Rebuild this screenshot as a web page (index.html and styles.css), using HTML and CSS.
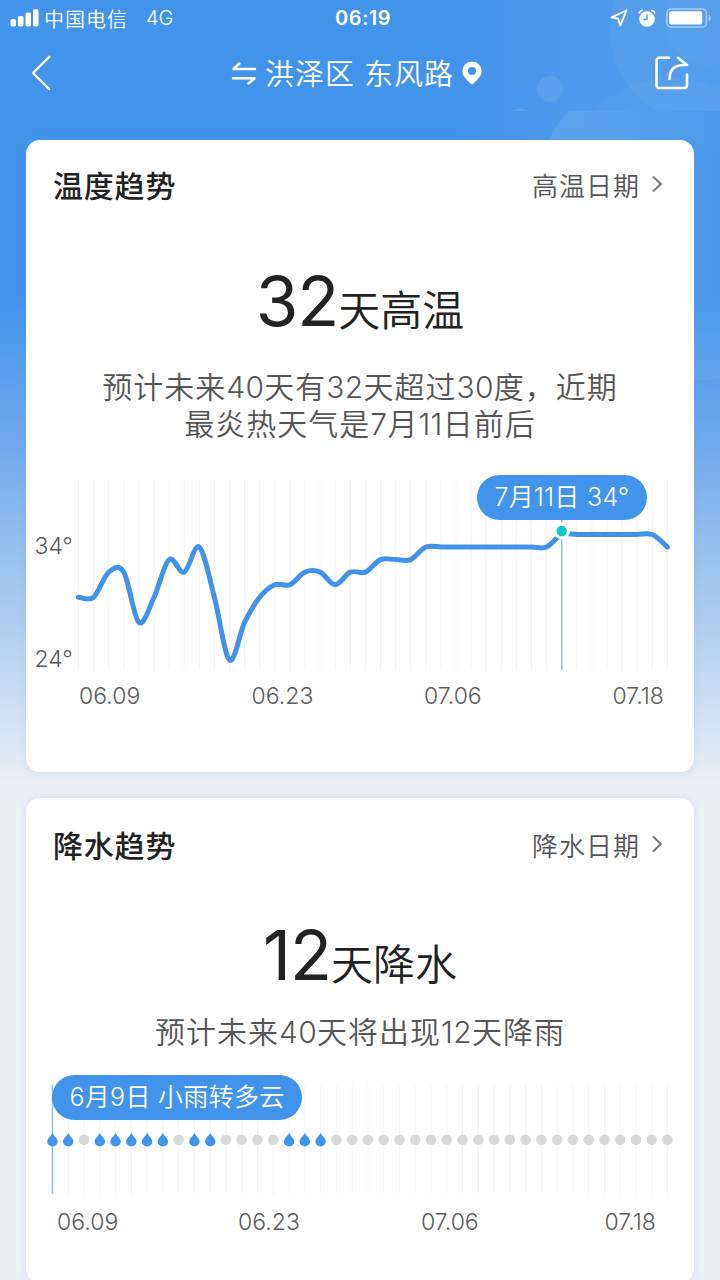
FILE: index.html
```
<!DOCTYPE html>
<html lang="zh-CN">
  <head>
    <meta charset="UTF-8" />
    <meta name="viewport" content="width=device-width, initial-scale=1.0" />
    <title>40天天气趋势</title>
    <link rel="stylesheet" href="styles.css">
  </head>
  <body>
    <svg class="bubbles" width="720" height="400" viewBox="0 0 720 400">
      <defs>
        <linearGradient id="glow" x1="0" x2="1" y1="0" y2="0">
          <stop offset="0" stop-color="#fff" stop-opacity="0" />
          <stop offset="0.5" stop-color="#fff" stop-opacity="0.06" />
          <stop offset="1" stop-color="#fff" stop-opacity="0.05" />
        </linearGradient>
        <linearGradient id="fade" x1="0" x2="1" y1="0" y2="0">
          <stop offset="0" stop-color="#fff" stop-opacity="0.1" />
          <stop offset="1" stop-color="#fff" stop-opacity="0.01" />
        </linearGradient>
        <clipPath id="top"><rect width="720" height="111" /></clipPath>
      </defs>
      <path d="M450 0H720V378Q706 381 690 380V140H450z" fill="url(#glow)" />
      <g clip-path="url(#top)" fill="#fff">
        <circle cx="703" cy="30" r="93" fill-opacity="0.045" />
        <circle cx="709" cy="20" r="45" fill-opacity="0.04" />
        <circle cx="550" cy="89" r="13" fill-opacity="0.09" />
        <circle cx="520" cy="119" r="11" fill-opacity="0.12" />
        <circle cx="672" cy="190" r="112" fill-opacity="0.035" />
      </g>
      <path d="M549 140q8-17 20-29h151v40H549z" fill="url(#fade)" />
    </svg>

    <div class="statusbar">
      <div class="status-left">
        <svg width="29" height="18" viewBox="0 0 29 18" fill="#fff">
          <rect x="0.5" y="10" width="5.5" height="7.5" rx="1.6" />
          <rect x="8" y="7" width="5.5" height="10.5" rx="1.6" />
          <rect x="15.5" y="3.5" width="5.5" height="14" rx="1.6" />
          <rect x="23" y="0.2" width="5.5" height="17.3" rx="1.6" />
        </svg>
        <span class="carrier">中国电信</span>
        <span class="network">4G</span>
      </div>
      <div class="time">06:19</div>
      <div class="status-right">
        <svg width="18" height="18" viewBox="0 0 18 18" fill="none" stroke="#fff" stroke-width="1.9" stroke-linejoin="round">
          <path d="M16.500 1.500 1.500 8.300l6.800 1.400 2 6.800z" />
        </svg>
        <svg width="18" height="18" viewBox="0 0 18 18">
          <circle cx="9" cy="10" r="7.8" fill="#fff" />
          <path d="M1 4.500 Q1.500 1.500 4.800 1.200M17 4.500Q16.500 1.500 13.200 1.200" stroke="#fff" stroke-width="1.6" fill="none" />
          <path d="M9 5.500V10.500H5.500" stroke="#4f9aeb" stroke-width="1.4" fill="none" />
        </svg>
        <svg width="46" height="20" viewBox="0 0 46 20">
          <rect x="0.9" y="0.9" width="39.5" height="18" rx="4" fill="none" stroke="#fff" stroke-opacity="0.45" stroke-width="1.5" />
          <rect x="3.2" y="3.3" width="33" height="13.2" rx="2" fill="#fff" />
          <path d="M42.8 6.500q2 1 2 3.400t-2 3.400z" fill="#fff" fill-opacity="0.5" />
        </svg>
      </div>
    </div>

    <div class="navbar">
      <svg width="20" height="36" viewBox="0 0 20 36" fill="none" stroke="#fff" stroke-width="2.4" stroke-linecap="round" stroke-linejoin="round">
        <path d="M18.200 1.800 2 18l16.200 16.200" />
      </svg>
      <div class="location">
        <svg width="26" height="26" viewBox="0 0 26 26" fill="none" stroke="#fff" stroke-width="2.5" stroke-linecap="round" stroke-linejoin="round">
          <path d="M8.500 3.500 2.500 9H24M2 18.200H23.500L17.500 23.500" />
        </svg>
        <span>洪泽区 东风路</span>
        <svg width="20" height="24" viewBox="0 0 20 24">
          <path d="M10 0.500a9.600 9.600 0 0 0-9.600 9.600C0.400 16 6 19.500 8.700 22.800q1.300 1.300 2.600 0C14 19.500 19.600 16 19.600 10.100A9.600 9.600 0 0 0 10 0.500zM10 6a4 4 0 1 1 0 8 4 4 0 0 1 0-8z" fill="#fff" fill-rule="evenodd" />
        </svg>
      </div>
      <svg width="34" height="34" viewBox="0 0 34 34" fill="none" stroke="#fff" stroke-width="2.6" stroke-linecap="round" stroke-linejoin="round">
        <path d="M14 1.800H4.500Q1.500 1.800 1.500 4.800V29Q1.500 32 4.500 32H29Q32 32 32 29V18.500" />
        <path d="M23 1.800 32 9H29C19 9 14.500 14 14.500 23" />
      </svg>
    </div>

    <div class="card temp-card">
      <div class="card-head">
        <h2>温度趋势</h2>
        <a class="more">高温日期
          <svg width="12" height="18" viewBox="0 0 12 18"><path d="M2 1.500 9.800 9 2 16.500" /></svg>
        </a>
      </div>
      <div class="summary"><b>32</b>天高温</div>
      <p class="desc">预计未来<i>40</i>天有<i>32</i>天超过<i>30</i>度，近期<br>最炎热天气是<i>7</i>月<i>11</i>日前后</p>
      <div class="chart">
        <svg id="tempChart" width="668" height="240" viewBox="0 0 668 240"></svg>
        <div class="tip temp-tip">7月11日 34°</div>
      </div>
    </div>

    <div class="card rain-card">
      <div class="card-head">
        <h2>降水趋势</h2>
        <a class="more">降水日期
          <svg width="12" height="18" viewBox="0 0 12 18"><path d="M2 1.500 9.800 9 2 16.500" /></svg>
        </a>
      </div>
      <div class="summary"><b>12</b>天降水</div>
      <p class="desc">预计未来<i>40</i>天将出现<i>12</i>天降雨</p>
      <div class="chart">
        <svg id="rainChart" width="668" height="165" viewBox="0 0 668 165"></svg>
        <div class="tip rain-tip">6月9日 小雨转多云</div>
      </div>
    </div>

    <script>
      const temps = [29, 29, 31, 31, 27, 29, 32, 31, 33, 29, 24, 27, 29, 30, 30, 31, 31, 30, 31, 31,
        32, 32, 32, 33, 33, 33, 33, 33, 33, 33, 33, 33, 34, 34, 34, 34, 34, 34, 34, 33]
      const rainDays = [0, 1, 3, 4, 5, 6, 7, 9, 10, 15, 16, 17]

      function vline(x, y1, y2, cls) {
        return `<path class="${cls}" d="M${x} ${y1}V${y2}"/>`
      }

      function label(x, y, text) {
        return `<text x="${x}" y="${y}">${text}</text>`
      }

      function drawTemp() {
        const pts = temps.map((t, i) => [52.5 + i * 15.1, 185 - (t - 24) * 12.55])
        let out = pts.map(p => vline(p[0], 5, 195, "grid")).join("")
        out += vline(535.7, 45, 195, "cursor")

        // smooth the line through every day
        let d = `M${pts[0]}`
        for (let i = 0; i < pts.length - 1; i++) {
          const a = pts[i - 1] || pts[i]
          const b = pts[i]
          const c = pts[i + 1]
          const e = pts[i + 2] || c
          d += `C${b[0] + (c[0] - a[0]) / 6} ${b[1] + (c[1] - a[1]) / 6} ${c[0] - (e[0] - b[0]) / 6} ${c[1] - (e[1] - b[1]) / 6} ${c}`
        }
        out += `<path class="line" d="${d}"/>`
        out += `<circle cx="535.7" cy="56" r="8.3" fill="#fff"/><circle cx="535.7" cy="56" r="5.2" fill="#0cc9c9"/>`
        out += label(8.5, 79, "34°") + label(8.5, 192, "24°")
        out += label(53, 228.5, "06.09") + label(225.5, 228.5, "06.23") + label(398, 228.5, "07.06") + label(586.5, 228.5, "07.18")
        document.getElementById("tempChart").innerHTML = out
      }

      function drawRain() {
        let out = ""
        for (let i = 0; i < 40; i++) {
          const x = 26.5 + i * 15.77
          out += vline(x, 10, 119, i === 0 ? "cursor" : "grid")
          if (rainDays.includes(i)) {
            out += `<path class="drop" d="M${x} 58C${x + 1.5} 61 ${x + 5.2} 63.5 ${x + 5.2} 66.5A5.2 5 0 0 1 ${x - 5.2} 66.5C${x - 5.2} 63.5 ${x - 1.5} 61 ${x} 58z"/>`
          } else {
            out += `<circle class="dry" cx="${x}" cy="64.7" r="5.3"/>`
          }
        }
        out += label(31, 155, "06.09") + label(212, 155, "06.23") + label(395, 155, "07.06") + label(578.5, 155, "07.18")
        document.getElementById("rainChart").innerHTML = out
      }

      drawTemp()
      drawRain()
    </script>
  </body>
</html>
```
FILE: styles.css
```
* {
  box-sizing: border-box;
}

body {
  margin: 0;
  width: 720px;
  height: 1280px;
  overflow: hidden;
  position: relative;
  background: #ebf0f3 linear-gradient(#4293ea 0, #4293ea 300px, #76adec 460px, #d0dff2 710px, #ebf0f3 790px) no-repeat;
  font-family: Inter, "Noto Sans CJK SC", sans-serif;
  color: #222;
}

svg {
  display: block;
  flex: none;
}

.bubbles {
  position: absolute;
  top: 0;
  left: 0;
}

.statusbar,
.navbar,
.card {
  position: relative;
}

.statusbar {
  display: grid;
  grid-template-columns: 1fr auto 1fr;
  align-items: center;
  height: 36px;
  padding: 0 8px 0 10px;
  color: #fff;
  font-size: 20px;
}

.status-left,
.status-right {
  display: flex;
  align-items: center;
}

.status-right {
  justify-content: flex-end;
  gap: 10px;
}

.carrier {
  margin-left: 5px;
  letter-spacing: 1px;
  font-weight: 350;
}

.network {
  margin-left: 18px;
  font-weight: 350;
}

.time {
  padding-left: 4px;
  font-weight: 600;
  letter-spacing: 0.5px;
}

.navbar {
  display: flex;
  align-items: center;
  justify-content: space-between;
  height: 74px;
  padding: 0 31px;
  color: #fff;
}

.location {
  display: flex;
  align-items: center;
  gap: 8px;
  padding-left: 7px;
  font-size: 29px;
  font-weight: 350;
  letter-spacing: 1px;
}

.location span {
  margin-top: -2px;
}

.card {
  margin: 0 26px;
  background: #fff;
  border-radius: 14px;
  box-shadow: 0 0 8px rgba(120, 160, 220, 0.2);
}

.temp-card {
  margin-top: 30px;
  height: 632px;
}

.rain-card {
  margin-top: 26px;
  height: 485px;
}

.card-head {
  display: flex;
  align-items: center;
  justify-content: space-between;
  height: 88px;
  padding: 0 31px 0 27px;
}

.rain-card .card-head {
  height: 92px;
}

.card-head h2 {
  margin: 0;
  font-size: 30px;
  font-weight: 500;
  letter-spacing: 0.8px;
}

.more {
  display: flex;
  align-items: center;
  gap: 11px;
  font-size: 26px;
  font-weight: 350;
  letter-spacing: 1px;
  color: #555;
}

.more path {
  fill: none;
  stroke: #777;
  stroke-width: 2;
}

.summary {
  height: 110px;
  margin-top: 18px;
  line-height: 110px;
  text-align: center;
  font-size: 42px;
  font-weight: 350;
}

.rain-card .summary {
  margin-top: 10px;
}

.summary b {
  font-size: 69px;
  font-weight: 400;
  letter-spacing: -1px;
}

.desc {
  margin: 13px 0 0;
  text-align: center;
  font-size: 30px;
  font-weight: 350;
  line-height: 37px;
  letter-spacing: 1px;
  color: #555;
}

.rain-card .desc {
  margin-top: 4px;
}

.desc i {
  font-style: normal;
  letter-spacing: 0.3px;
}

.chart {
  position: relative;
}

.temp-card .chart {
  margin-top: 32px;
}

.rain-card .chart {
  margin-top: 24px;
}

.chart text {
  font-size: 23px;
  font-weight: 350;
  fill: #5c5c5c;
}

.grid {
  stroke: #f3f3f3;
  stroke-width: 1;
}

.cursor {
  stroke: #8fc0f2;
  stroke-width: 1.5;
}

.line {
  fill: none;
  stroke: #4293e8;
  stroke-width: 5;
  stroke-linecap: round;
}

.drop {
  fill: #4293ea;
}

.dry {
  fill: #d8d8d8;
}

.tip {
  position: absolute;
  top: 0;
  height: 45px;
  border-radius: 23px;
  background: #4293ea;
  color: #fff;
  font-size: 25px;
  font-weight: 350;
  line-height: 45px;
  letter-spacing: 0.3px;
  text-align: center;
  white-space: nowrap;
}

.temp-tip {
  left: 451px;
  width: 170px;
}

.rain-tip {
  left: 26px;
  width: 250px;
}
```
